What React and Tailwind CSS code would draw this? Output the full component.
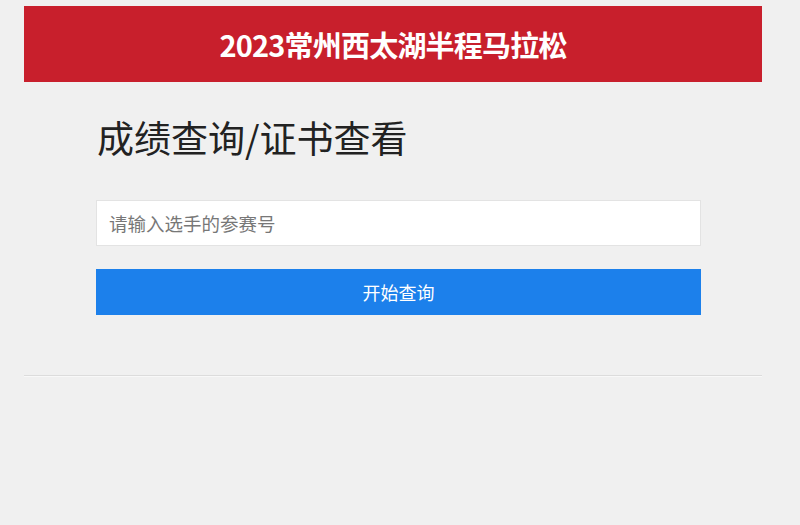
export default function App() {
  const font = { fontFamily: '"Noto Sans CJK SC", "Noto Sans", sans-serif' };
  return (
    <div className="min-h-[525px] w-full bg-[#f0f0f0] pt-[6px]" style={font}>
      <div className="mx-[24px] w-[738px]">
        <div className="flex h-[76px] items-center justify-center bg-[#c81f2c]">
          <h1 className="text-[29px] font-bold leading-none tracking-[-0.8px] text-white">2023常州西太湖半程马拉松</h1>
        </div>
        <div className="pl-[72px]">
          <h2 className="mt-[33px] pl-[1px] text-[37px] leading-[44px] text-[#222]">成绩查询/证书查看</h2>
          <input
            className="mt-[41px] block h-[46px] w-[605px] border border-[#e3e3e3] bg-white px-[12px] text-[18.5px] text-[#333] outline-none placeholder:text-[#777]"
            placeholder="请输入选手的参赛号"
          />
          <button className="mt-[23px] flex h-[46px] w-[605px] items-center justify-center bg-[#1c80eb] text-[18px] text-white">
            开始查询
          </button>
        </div>
        <div className="mt-[60px] border-t border-b border-t-[#dcdcdc] border-b-[#f8f8f8]"></div>
      </div>
    </div>
  );
}
